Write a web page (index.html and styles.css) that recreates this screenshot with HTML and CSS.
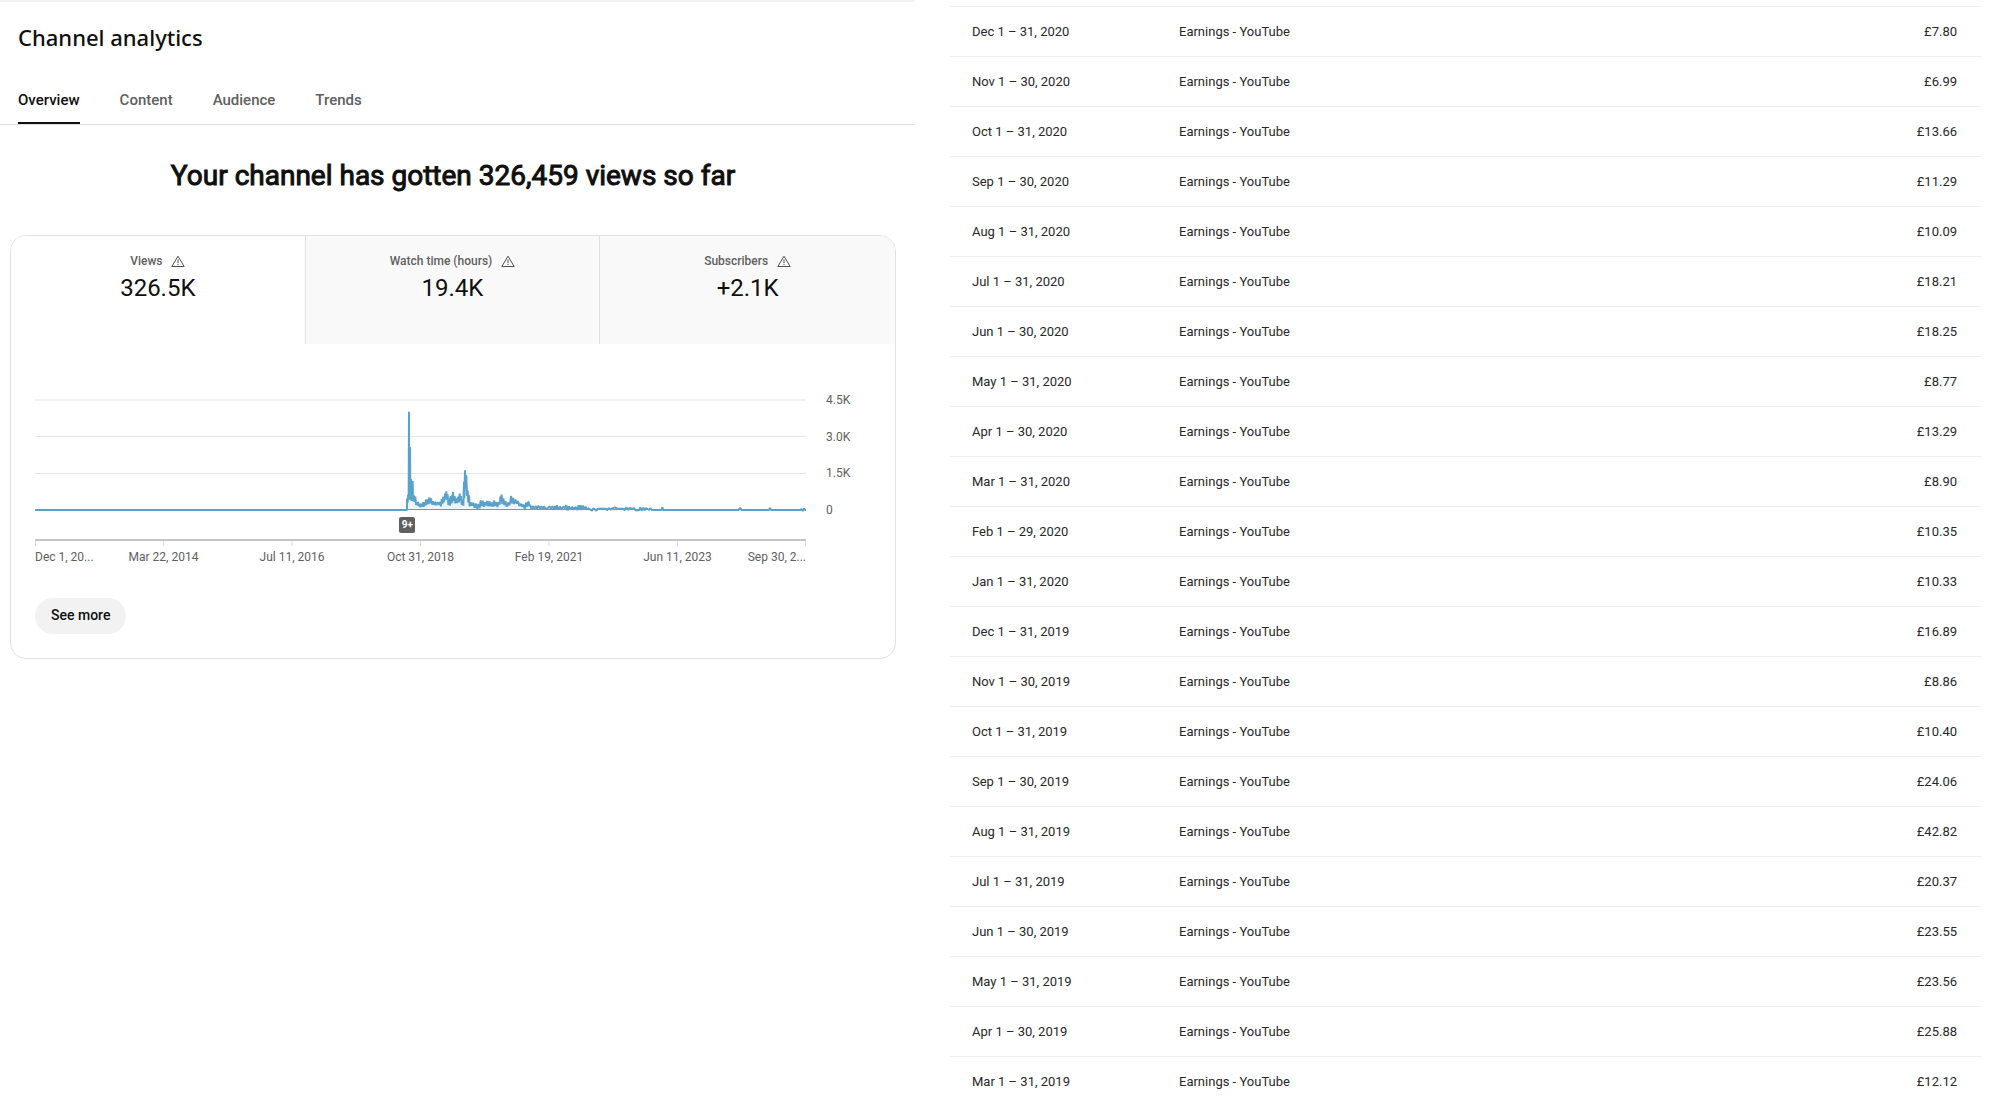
FILE: index.html
```
<!DOCTYPE html>
<html lang="en">
<head>
    <meta charset="utf-8">
    <title>Channel analytics</title>
    <link rel="stylesheet" href="styles.css">
</head>
<body>
    <!-- Analytics panel -->
    <main class="analytics">
        <h1>Channel analytics</h1>

        <nav class="tabs">
            <a href="#overview" class="tab active">Overview</a>
            <a href="#content" class="tab">Content</a>
            <a href="#audience" class="tab">Audience</a>
            <a href="#trends" class="tab">Trends</a>
        </nav>

        <h2>Your channel has gotten 326,459 views so far</h2>

        <section class="card">
            <div class="metrics">
                <button class="metric selected">
                    <span class="metric-label">Views
                        <svg class="warning" viewBox="0 0 14 12"><path d="M7 1.2L13.2 11.5H.8Z"/><path d="M7 4.5V8M7 8.8V10"/></svg>
                    </span>
                    <span class="metric-value">326.5K</span>
                </button>
                <button class="metric">
                    <span class="metric-label">Watch time (hours)
                        <svg class="warning" viewBox="0 0 14 12"><path d="M7 1.2L13.2 11.5H.8Z"/><path d="M7 4.5V8M7 8.8V10"/></svg>
                    </span>
                    <span class="metric-value">19.4K</span>
                </button>
                <button class="metric">
                    <span class="metric-label">Subscribers
                        <svg class="warning" viewBox="0 0 14 12"><path d="M7 1.2L13.2 11.5H.8Z"/><path d="M7 4.5V8M7 8.8V10"/></svg>
                    </span>
                    <span class="metric-value">+2.1K</span>
                </button>
            </div>

            <!-- Views chart -->
            <div class="chart">
                <div class="plot">
                    <svg class="graph" viewBox="0 0 2313 468" preserveAspectRatio="none">
                        <path class="grid-top" d="M0 24H2313"/>
                        <path class="grid" d="M0 133.5H2313M0 244.5H2313"/>
                        <path class="tick" d="M1.5 444V462M386 444V462M771 444V462M1156.5 444V462M1542 444V462M1927.5 444V462M2311.5 444V462"/>
                        <path class="axis" d="M0 444H2313"/>
                        <g transform="translate(1065 -6)">
                            <path class="area" d="M50 358L53 325L57 80L65 250L75 325L90 347L120 330L150 340L168 315L180 335L190 320L200 335L210 325L218 340L225 250L232 310L240 343L262 349L275 340L320 345L334 325L345 342L365 330L400 350L414 340L425 352L585 355L585 358Z"/>
                            <path class="zero" d="M-1065 358.5H1248"/>
                            <path class="views" d="M-1065 360H51V326L53 338L54 314L56 328L57 65V328L60 172L61 330L63 268L65 333L68 273L69 334L72 317L74 336L76 320L78 345L80 338L82 346L84 336L86 348L89 341L91 352L94 341L96 350L99 337L101 350L104 337L106 347L108 328L110 344L113 328L115 342L118 322L121 340L123 325L126 344L129 334L132 345L135 336L139 345L143 337L147 344L150 336L153 349L155 327L157 341L160 320L162 337L165 311L167 328L169 304L171 330L173 313L175 345L178 325L180 347L182 318L184 340L186 316L187 338L189 306L191 332L194 318L196 340L199 325L201 339L204 320L207 337L209 311L211 330L213 318L215 344L218 331L220 347L222 275L223 325L225 241L227 298L229 256L231 318L233 301L235 338L237 316L239 349L242 337L246 347L250 338L254 354L258 341L262 356L266 342L269 355L272 331L275 348L278 332L282 350L285 337L288 346L292 333L295 349L299 334L302 349L306 338L309 350L312 331L315 348L319 336L322 351L326 337L329 344L331 320L333 335L335 314L337 342L340 325L343 345L346 333L350 350L354 338L358 346L361 336L363 318L366 340L369 324L372 342L376 329L380 341L384 333L388 348L392 341L396 350L400 344L405 359L408 338L412 350L415 334L418 347L421 345L424 358L429 348L433 356L438 348L441 356L445 347L450 356L454 349L458 357L462 349L466 356L472 355L478 349L483 357L487 349L492 356L495 348L498 356L501 346L505 358L510 350L515 357L520 350L525 355L529 345L532 361L537 349L541 358L546 351L552 357L557 351L562 360L566 346L569 356L572 346L576 357L579 347L583 357L587 350L590 358L595 355L600 358L606 362L610 355L619 362L623 356H648L651 361L656 354L662 359L667 355L675 352L682 356H700L704 361L709 352L714 360L719 354L726 357L733 355L737 361H747L751 352L755 362L760 353L764 361L768 354L777 360L781 354L785 360H814L817 352L820 361L823 360H1046L1050 354L1055 360H1137L1140 354L1144 360H1231L1234 357L1238 363L1242 355L1245 360H1248"/>
                        </g>
                    </svg>
                    <button class="marker">9+</button>
                </div>
                <div class="scale">
                    <span>4.5K</span>
                    <span>3.0K</span>
                    <span>1.5K</span>
                    <span>0</span>
                </div>
                <div class="dates">
                    <span>Dec 1, 20...</span>
                    <span>Mar 22, 2014</span>
                    <span>Jul 11, 2016</span>
                    <span>Oct 31, 2018</span>
                    <span>Feb 19, 2021</span>
                    <span>Jun 11, 2023</span>
                    <span>Sep 30, 2...</span>
                </div>
            </div>

            <button class="see-more">See more</button>
        </section>
    </main>

    <!-- Monthly earnings -->
    <section class="earnings">
        <table>
            <tr><td>Dec 1 – 31, 2020</td><td>Earnings - YouTube</td><td>£7.80</td></tr>
            <tr><td>Nov 1 – 30, 2020</td><td>Earnings - YouTube</td><td>£6.99</td></tr>
            <tr><td>Oct 1 – 31, 2020</td><td>Earnings - YouTube</td><td>£13.66</td></tr>
            <tr><td>Sep 1 – 30, 2020</td><td>Earnings - YouTube</td><td>£11.29</td></tr>
            <tr><td>Aug 1 – 31, 2020</td><td>Earnings - YouTube</td><td>£10.09</td></tr>
            <tr><td>Jul 1 – 31, 2020</td><td>Earnings - YouTube</td><td>£18.21</td></tr>
            <tr><td>Jun 1 – 30, 2020</td><td>Earnings - YouTube</td><td>£18.25</td></tr>
            <tr><td>May 1 – 31, 2020</td><td>Earnings - YouTube</td><td>£8.77</td></tr>
            <tr><td>Apr 1 – 30, 2020</td><td>Earnings - YouTube</td><td>£13.29</td></tr>
            <tr><td>Mar 1 – 31, 2020</td><td>Earnings - YouTube</td><td>£8.90</td></tr>
            <tr><td>Feb 1 – 29, 2020</td><td>Earnings - YouTube</td><td>£10.35</td></tr>
            <tr><td>Jan 1 – 31, 2020</td><td>Earnings - YouTube</td><td>£10.33</td></tr>
            <tr><td>Dec 1 – 31, 2019</td><td>Earnings - YouTube</td><td>£16.89</td></tr>
            <tr><td>Nov 1 – 30, 2019</td><td>Earnings - YouTube</td><td>£8.86</td></tr>
            <tr><td>Oct 1 – 31, 2019</td><td>Earnings - YouTube</td><td>£10.40</td></tr>
            <tr><td>Sep 1 – 30, 2019</td><td>Earnings - YouTube</td><td>£24.06</td></tr>
            <tr><td>Aug 1 – 31, 2019</td><td>Earnings - YouTube</td><td>£42.82</td></tr>
            <tr><td>Jul 1 – 31, 2019</td><td>Earnings - YouTube</td><td>£20.37</td></tr>
            <tr><td>Jun 1 – 30, 2019</td><td>Earnings - YouTube</td><td>£23.55</td></tr>
            <tr><td>May 1 – 31, 2019</td><td>Earnings - YouTube</td><td>£23.56</td></tr>
            <tr><td>Apr 1 – 30, 2019</td><td>Earnings - YouTube</td><td>£25.88</td></tr>
            <tr><td>Mar 1 – 31, 2019</td><td>Earnings - YouTube</td><td>£12.12</td></tr>
        </table>
    </section>
</body>
</html>
```
FILE: styles.css
```
* {
    box-sizing: border-box;
}

body {
    margin: 0;
    height: 100vh;
    overflow: hidden;
    display: grid;
    grid-template-columns: 915fr 1086fr;
    font-family: Roboto, Arial, sans-serif;
    color: #0f0f0f;
    background-color: #fff;
}

button {
    font-family: inherit;
    border: none;
    padding: 0;
    cursor: pointer;
}

/* Left side */
.analytics {
    border-top: 2px solid #f3f3f3;
}

h1 {
    margin: 19px 18px 0;
    font-family: "Noto Sans", sans-serif;
    font-size: 22px;
    font-weight: 500;
    line-height: 32px;
}

.tabs {
    display: flex;
    gap: 40px;
    margin-top: 23px;
    padding: 0 18px;
    border-bottom: 1px solid #e0e0e0;
}

.tab {
    height: 48px;
    border-bottom: 2px solid transparent;
    font-size: 15px;
    font-weight: 500;
    line-height: 48px;
    color: #606060;
    text-decoration: none;
}

.tab.active {
    color: #0f0f0f;
    border-color: #0f0f0f;
}

h2 {
    margin: 32px 9px 40px 0;
    font-size: 28px;
    font-weight: 400;
    line-height: 38px;
    text-align: center;
    -webkit-text-stroke: 1px #0f0f0f;
}

/* Card with metrics and chart */
.card {
    margin: 0 19px 0 10px;
    border: 1px solid #e2e2e2;
    border-radius: 16px;
    overflow: hidden;
}

.metrics {
    display: grid;
    grid-template-columns: repeat(3, 1fr);
}

.metric {
    height: 108px;
    padding: 17px 0;
    display: flex;
    flex-direction: column;
    align-items: center;
    gap: 3px;
    color: #0f0f0f;
    background-color: #f9f9f9;
    border-right: 1px solid #e0e0e0;
}

.metric.selected {
    background-color: #fff;
}

.metric:last-child {
    border-right: none;
}

.metric-label {
    display: flex;
    align-items: center;
    gap: 9px;
    font-size: 12px;
    font-weight: 500;
    line-height: 16px;
    color: #606060;
}

.metric-value {
    font-size: 24px;
    line-height: 32px;
}

.warning {
    width: 14px;
    height: 12px;
    fill: none;
    stroke: #505050;
    stroke-width: 1;
}

.chart {
    display: grid;
    grid-template-columns: 1fr 40px;
    column-gap: 20px;
    margin: 48px 29px 32px 24px;
    font-size: 12px;
    color: #606060;
}

.plot {
    position: relative;
    height: 156px;
}

.graph {
    display: block;
    width: 100%;
    height: 100%;
    fill: none;
}

.graph path {
    vector-effect: non-scaling-stroke;
}

.grid-top {
    stroke: #f2f2f2;
    stroke-width: 2;
}

.grid {
    stroke: #e6e6e6;
}

.tick {
    stroke: #ddd;
}

.axis {
    stroke: #c4c4c4;
    stroke-width: 2;
}

.zero {
    stroke: #909090;
}

.area {
    fill: #ecf5fa;
}

.views {
    stroke: #5ba2ca;
    stroke-width: 2;
    stroke-linejoin: bevel;
}

.marker {
    position: absolute;
    left: 47%;
    top: 125px;
    margin-left: 2px;
    width: 16px;
    height: 16px;
    border-radius: 2px;
    font-size: 10px;
    font-weight: 700;
    line-height: 16px;
    color: #fff;
    background-color: #606060;
}

.scale {
    height: 126px;
    display: flex;
    flex-direction: column;
    justify-content: space-between;
    line-height: 16px;
}

.dates {
    display: grid;
    grid-template-columns: 1fr 2fr 2fr 2fr 2fr 2fr 1fr;
    line-height: 18px;
    text-align: center;
    white-space: nowrap;
}

.dates span:first-child {
    text-align: left;
}

.dates span:last-child {
    text-align: right;
}

.see-more {
    display: block;
    height: 36px;
    margin: 0 24px 24px;
    padding: 0 16px 2px;
    border-radius: 18px;
    font-size: 14px;
    font-weight: 500;
    color: #0f0f0f;
    background-color: #f2f2f2;
}

/* Right side */
.earnings {
    padding: 6px 20px 0 35px;
}

table {
    width: 100%;
    table-layout: fixed;
    border-collapse: separate;
    border-spacing: 0;
    font-size: 13px;
    color: #282828;
}

td {
    height: 50px;
    padding: 0;
    border-top: 1px solid #f0f0f0;
}

td:first-child {
    width: 229px;
    padding-left: 22px;
}

td:last-child {
    padding-right: 24px;
    text-align: right;
}
```
